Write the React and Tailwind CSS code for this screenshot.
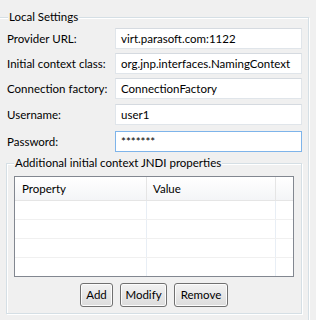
import React from 'react';

const rows = [
  { label: 'Provider URL:', value: 'virt.parasoft.com:1122' },
  { label: 'Initial context class:', value: 'org.jnp.interfaces.NamingContext' },
  { label: 'Connection factory:', value: 'ConnectionFactory' },
  { label: 'Username:', value: 'user1' },
];

const Field = ({ label, value, focused, className = '' }) => (
  <div className={`flex items-center whitespace-nowrap ${className}`}>
    <span className="w-[108px] shrink-0">{label}</span>
    <div
      className={`w-[187px] h-[21px] shrink-0 bg-white flex items-center pl-[5px] border overflow-hidden ${
        focused ? 'border-[#7eb4ea]' : 'border-[#e0e5ea] border-t-[#d5dae0]'
      }`}
    >
      {value}
    </div>
  </div>
);

const Button = ({ children, className = '' }) => (
  <button
    className={`h-[24px] border border-[#707070] rounded-[3px] bg-gradient-to-b from-[#f2f2f2] to-[#dcdcdc] shadow-[inset_0_0_0_1px_#fcfcfc] text-[#000] leading-none ${className}`}
  >
    {children}
  </button>
);

export default function App() {
  return (
    <div
      className="w-[316px] h-[320px] overflow-hidden bg-[#f0f0f0] text-[11.5px] text-black pt-[17px]"
      style={{ fontFamily: 'Lato, "Noto Sans", sans-serif' }}
    >
      {/* Local Settings group */}
      <div className="relative -ml-[2px] w-[311px] h-[330px] border border-[#d5dfe5] shadow-[inset_1px_1px_0_#fff,1px_1px_0_#fff]">
        <span className="absolute left-[9px] -top-[9px] px-[1px] bg-[#f0f0f0] leading-[16px] whitespace-nowrap">Local Settings</span>

        <div className="flex flex-col pl-[8px] pt-[10px]">
          {rows.map((r, i) => (
            <Field key={r.label} {...r} className={i === 0 ? '' : i === 3 ? 'mt-[5px]' : 'mt-[4px]'} />
          ))}
          <Field label="Password:" value="*******" focused className="mt-[6px]" />

          {/* Additional properties group */}
          <div className="relative mt-[11px] -ml-[1px] w-[296px] h-[151px] border border-[#d5dfe5] shadow-[inset_1px_1px_0_#fff,1px_1px_0_#fff] flex flex-col items-center">
            <span className="absolute left-[7px] -top-[9px] px-[1px] bg-[#f0f0f0] leading-[16px] whitespace-nowrap">
              Additional initial context JNDI properties
            </span>

            <div className="mt-[12px] w-[280px] h-[101px] border border-[#828790] bg-white flex flex-col overflow-hidden">
              <div className="grid grid-cols-[132px_129px_1fr] h-[24px] shrink-0 border-b border-[#e5e5e5] bg-gradient-to-b from-[#ffffff] to-[#f4f5f7]">
                <div className="border-r border-[#e5e5e5] pl-[7px] flex items-center">Property</div>
                <div className="border-r border-[#e5e5e5] pl-[6px] flex items-center">Value</div>
                <div />
              </div>
              {[0, 1, 2, 3].map((i) => (
                <div key={i} className="grid grid-cols-[132px_129px_1fr] h-[19px] shrink-0 border-b border-[#f0f0f0]">
                  <div className="border-r border-[#e8eef5]" />
                  <div className="border-r border-[#e8eef5]" />
                  <div />
                </div>
              ))}
            </div>

            <div className="flex gap-[7px] mt-[6px]">
              <Button className="w-[33px]">Add</Button>
              <Button className="w-[47px]">Modify</Button>
              <Button className="w-[54px]">Remove</Button>
            </div>
          </div>
        </div>
      </div>
    </div>
  );
}
